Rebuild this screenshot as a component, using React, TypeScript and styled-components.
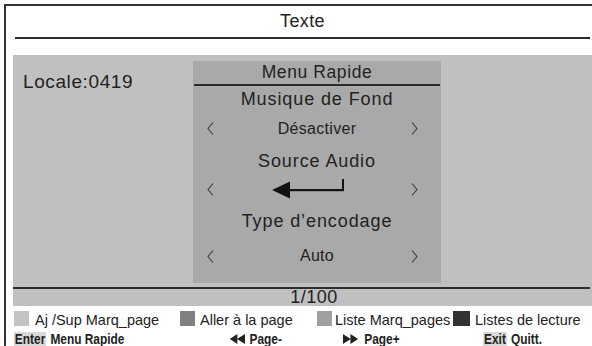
import React from "react";
import styled, { createGlobalStyle } from "styled-components";

const Global = createGlobalStyle`
  html, body { margin: 0; padding: 0; background: #fff; overflow: hidden; }
  body { font-family: "Liberation Sans", Arial, sans-serif; color: #222; }
  #root { width: 592px; height: 346px; overflow: hidden; }
`;

const Frame = styled.div`
  box-sizing: border-box;
  margin: 4px 0 0 4px;
  width: 588px;
  height: 342px;
  border-top: 2px solid #333;
  border-left: 2px solid #333;
  padding-left: 7px;
  display: flex;
  flex-direction: column;
`;

const Header = styled.div`
  height: 31px;
  display: flex;
  align-items: center;
  justify-content: center;
  font-size: 18px;
  letter-spacing: 0.4px;
  color: #222;
`;

const Rule = styled.div<{ $w: number; $ml?: number; $mt?: number }>`
  width: ${(p) => p.$w}px;
  height: 2px;
  margin-left: ${(p) => p.$ml ?? 0}px;
  margin-top: ${(p) => p.$mt ?? 0}px;
  background: #2c2c2c;
  flex: none;
`;

const Panel = styled.div`
  margin-top: 16px;
  width: 579px;
  height: 251px;
  background: #c0c0c0;
  display: flex;
  flex-direction: column;
`;

const TopArea = styled.div`
  display: flex;
  align-items: flex-start;
`;

const Locale = styled.div`
  width: 180px;
  box-sizing: border-box;
  padding: 16px 0 0 10px;
  font-size: 19px;
  line-height: 22px;
  letter-spacing: 0.6px;
`;

const MenuBox = styled.div`
  margin-top: 6px;
  width: 248px;
  height: 222px;
  background: #a9a9a9;
  display: flex;
  flex-direction: column;
`;

const MenuTitle = styled.div`
  height: 23px;
  line-height: 23px;
  text-align: center;
  font-size: 17.5px;
  letter-spacing: 0.6px;
`;

const MenuRule = styled.div`
  height: 2px;
  margin: 0 1px;
  background: #2c2c2c;
`;

const LabelRow = styled.div<{ $h: number }>`
  height: ${(p) => p.$h}px;
  display: flex;
  align-items: center;
  justify-content: center;
  font-size: 18px;
  letter-spacing: 0.9px;
`;

const OptionRow = styled.div<{ $h: number }>`
  height: ${(p) => p.$h}px;
  display: grid;
  grid-template-columns: 1fr auto 1fr;
  align-items: center;
  font-size: 16px;
  letter-spacing: 0.3px;
`;

const ChevCell = styled.div<{ $side: "left" | "right" }>`
  display: flex;
  justify-content: ${(p) => (p.$side === "left" ? "flex-start" : "flex-end")};
  padding-left: ${(p) => (p.$side === "left" ? 14 : 0)}px;
  padding-right: ${(p) => (p.$side === "right" ? 23 : 0)}px;
  svg { display: block; }
`;

const Value = styled.div`
  text-align: center;
  line-height: 18px;
`;

const ArrowWrap = styled.div`
  margin-right: 18px;
  display: flex;
  svg { display: block; }
`;

const PageNo = styled.div`
  margin-left: 180px;
  width: 242px;
  height: 17px;
  line-height: 17px;
  text-align: center;
  font-size: 18px;
  letter-spacing: 0.5px;
`;

const LegendRow = styled.div`
  margin-top: 3px;
  padding-left: 1px;
  height: 18px;
  display: grid;
  grid-template-columns: 166px 137px 136px auto;
  align-items: center;
`;

const LegendItem = styled.div<{ $gap: number }>`
  display: flex;
  align-items: center;
  gap: ${(p) => p.$gap}px;
  font-size: 14.5px;
  white-space: nowrap;
`;

const Swatch = styled.span<{ $c: string; $w?: number }>`
  width: ${(p) => p.$w ?? 15}px;
  height: 15px;
  background: ${(p) => p.$c};
  flex: none;
`;

const LegendText = styled.span`
  padding-top: 3px;
`;

/* condensed bold key hints: laid out at full width, then squeezed horizontally */
const KeyRow = styled.div`
  margin-top: 5px;
  padding-left: 1.2px;
  width: 690px;
  height: 14px;
  display: grid;
  grid-template-columns: 254px 133px 165px auto;
  align-items: center;
  font-weight: bold;
  font-size: 14px;
  line-height: 14px;
  color: #222;
  transform: scaleX(0.85);
  transform-origin: left center;
`;

const KeyItem = styled.div<{ $gap: number }>`
  display: flex;
  align-items: center;
  gap: ${(p) => p.$gap}px;
  white-space: nowrap;
  svg { display: block; }
`;

const KeyCap = styled.span`
  background: #d9d9d9;
  padding: 0 1px;
`;

const Chevron = ({ dir }: { dir: "left" | "right" }) => (
  <svg width="7" height="13" viewBox="0 0 7 13">
    <polyline
      points={dir === "left" ? "6,0.5 1,6.5 6,12.5" : "1,0.5 6,6.5 1,12.5"}
      fill="none"
      stroke="#3c3c3c"
      strokeWidth="1.1"
    />
  </svg>
);

const ReturnArrow = () => (
  <svg width="72" height="20" viewBox="0 0 72 20">
    <polygon points="0,11 18,2.5 18,19.5" fill="#111" />
    <rect x="16" y="10" width="56" height="2.2" fill="#111" />
    <rect x="70" y="0" width="2" height="12" fill="#111" />
  </svg>
);

const DoubleTri = ({ dir }: { dir: "left" | "right" }) => (
  <svg width="18" height="10" viewBox="0 0 18 10">
    {dir === "left" ? (
      <>
        <polygon points="0,5 9,0 9,10" fill="#222" />
        <polygon points="8.5,5 18,0 18,10" fill="#222" />
      </>
    ) : (
      <>
        <polygon points="0,0 9.5,5 0,10" fill="#222" />
        <polygon points="9,0 18,5 9,10" fill="#222" />
      </>
    )}
  </svg>
);

const Option = ({ h, children }: { h: number; children: React.ReactNode }) => (
  <OptionRow $h={h}>
    <ChevCell $side="left">
      <Chevron dir="left" />
    </ChevCell>
    {children}
    <ChevCell $side="right">
      <Chevron dir="right" />
    </ChevCell>
  </OptionRow>
);

export default function App() {
  return (
    <>
      <Global />
      <Frame>
        <Header>Texte</Header>
        <Rule $w={575} $ml={2} />
        <Panel>
          <TopArea>
            <Locale>Locale:0419</Locale>
            <MenuBox>
              <MenuTitle>Menu Rapide</MenuTitle>
              <MenuRule />
              <LabelRow $h={27}>Musique de Fond</LabelRow>
              <Option h={31}>
                <Value>Désactiver</Value>
              </Option>
              <LabelRow $h={35}>Source Audio</LabelRow>
              <Option h={16}>
                <ArrowWrap>
                  <ReturnArrow />
                </ArrowWrap>
              </Option>
              <LabelRow $h={52}>Type d’encodage</LabelRow>
              <Option h={17}>
                <Value>Auto</Value>
              </Option>
            </MenuBox>
          </TopArea>
          <Rule $w={577} $mt={4} />
          <PageNo>1/100</PageNo>
        </Panel>
        <LegendRow>
          <LegendItem $gap={6}>
            <Swatch $c="#c4c4c4" />
            <LegendText>Aj /Sup Marq_page</LegendText>
          </LegendItem>
          <LegendItem $gap={5}>
            <Swatch $c="#808080" />
            <LegendText>Aller à la page</LegendText>
          </LegendItem>
          <LegendItem $gap={3}>
            <Swatch $c="#a0a0a0" />
            <LegendText>Liste Marq_pages</LegendText>
          </LegendItem>
          <LegendItem $gap={5}>
            <Swatch $c="#333" $w={17} />
            <LegendText>Listes de lecture</LegendText>
          </LegendItem>
        </LegendRow>
        <KeyRow>
          <KeyItem $gap={5}>
            <KeyCap>Enter</KeyCap>
            <span>Menu Rapide</span>
          </KeyItem>
          <KeyItem $gap={5}>
            <DoubleTri dir="left" />
            <span>Page-</span>
          </KeyItem>
          <KeyItem $gap={7}>
            <DoubleTri dir="right" />
            <span>Page+</span>
          </KeyItem>
          <KeyItem $gap={5}>
            <KeyCap>Exit</KeyCap>
            <span>Quitt.</span>
          </KeyItem>
        </KeyRow>
      </Frame>
    </>
  );
}
